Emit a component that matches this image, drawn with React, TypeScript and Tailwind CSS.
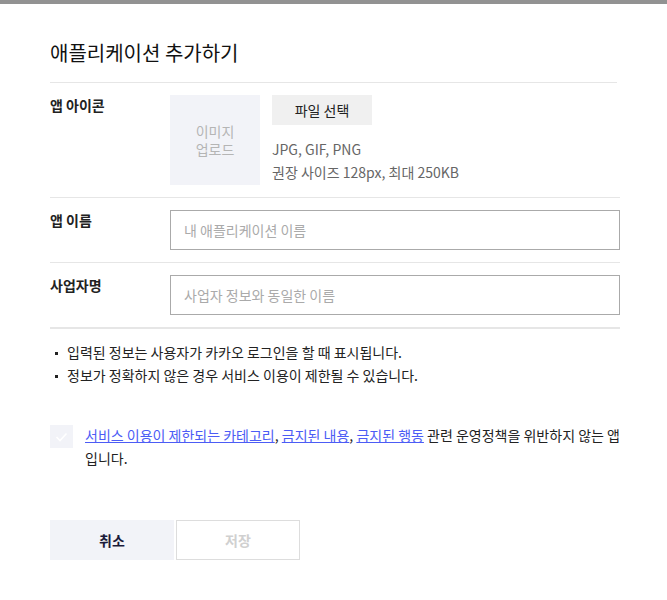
const font = { fontFamily: '"Noto Sans CJK KR", "Noto Sans", sans-serif' };

function Row({ label, children, last }: { label: string; children: React.ReactNode; last?: boolean }) {
  return (
    <div className={`flex py-3 ${last ? "" : "border-b border-[#e6e6e6]"}`}>
      <div className="w-[120px] shrink-0 text-[14px] font-bold leading-[20px] text-[#222]">{label}</div>
      <div className="flex-1">{children}</div>
    </div>
  );
}

function Bullet({ children }: { children: React.ReactNode }) {
  return (
    <li className="flex items-start">
      <span className="ml-[5px] mr-[9px] mt-[11px] h-[3px] w-[3px] shrink-0 bg-[#222]" />
      <span>{children}</span>
    </li>
  );
}

export default function App() {
  return (
    <div style={font} className="min-h-[600px] w-[667px] bg-white">
      <div className="h-[4px] bg-[#929292]" />
      <div className="px-[50px] pt-[35px]">
        <h1 className="pb-[15px] text-[20px] font-normal leading-[28px] text-[#111] border-b border-[#e6e6e6]">
          애플리케이션 추가하기
        </h1>

        <div className="w-[570px]">
          <Row label="앱 아이콘">
            <div className="flex gap-3">
              <div className="flex h-[90px] w-[90px] items-center justify-center bg-[#f2f3f8] text-center text-[14px] leading-[18px] text-[#b5b5b5]">
                이미지
                <br />
                업로드
              </div>
              <div className="flex flex-col">
                <button className="h-[30px] w-[100px] bg-[#f0f0f0] text-[14px] text-[#222]">파일 선택</button>
                <div className="mt-[13px] text-[14px] leading-[23px] text-[#666]">
                  <div>JPG, GIF, PNG</div>
                  <div>권장 사이즈 128px, 최대 250KB</div>
                </div>
              </div>
            </div>
          </Row>

          <Row label="앱 이름">
            <input
              placeholder="내 애플리케이션 이름"
              className="h-[40px] w-full border border-[#aaa] px-[13px] text-[14px] outline-none placeholder:text-[#aaa]"
            />
          </Row>

          <Row label="사업자명">
            <input
              placeholder="사업자 정보와 동일한 이름"
              className="h-[40px] w-full border border-[#aaa] px-[13px] text-[14px] outline-none placeholder:text-[#aaa]"
            />
          </Row>
        </div>
        <div className="w-[570px] border-t border-[#e6e6e6]" />

        <ul className="pt-[12px] text-[14px] leading-[23px] text-[#222]">
          <Bullet>입력된 정보는 사용자가 카카오 로그인을 할 때 표시됩니다.</Bullet>
          <Bullet>정보가 정확하지 않은 경우 서비스 이용이 제한될 수 있습니다.</Bullet>
        </ul>

        <div className="mt-[37px] flex">
          <div className="mt-[1px] flex h-[23px] w-[23px] shrink-0 items-center justify-center bg-[#f2f3f8]">
            <svg width="13" height="10" viewBox="0 0 13 10" fill="none">
              <path d="M1.5 5 L5 8.5 L11.5 1.5" stroke="#fff" strokeWidth="1.6" />
            </svg>
          </div>
          <p className="ml-[12px] w-[545px] shrink-0 text-[14px] leading-[23px] text-[#222]">
            <a className="text-[#4c5cf5] underline">서비스 이용이 제한되는 카테고리</a>,{" "}
            <a className="text-[#4c5cf5] underline">금지된 내용</a>,{" "}
            <a className="text-[#4c5cf5] underline">금지된 행동</a> 관련 운영정책을 위반하지 않는 앱
            입니다.
          </p>
        </div>

        <div className="mt-[50px] flex gap-[2px]">
          <button className="h-[40px] w-[124px] bg-[#f2f3f8] text-[14px] font-bold text-[#1b1b3a]">취소</button>
          <button className="h-[40px] w-[124px] border border-[#ddd] bg-white text-[14px] font-bold text-[#d0d0d0]">
            저장
          </button>
        </div>
      </div>
    </div>
  );
}
